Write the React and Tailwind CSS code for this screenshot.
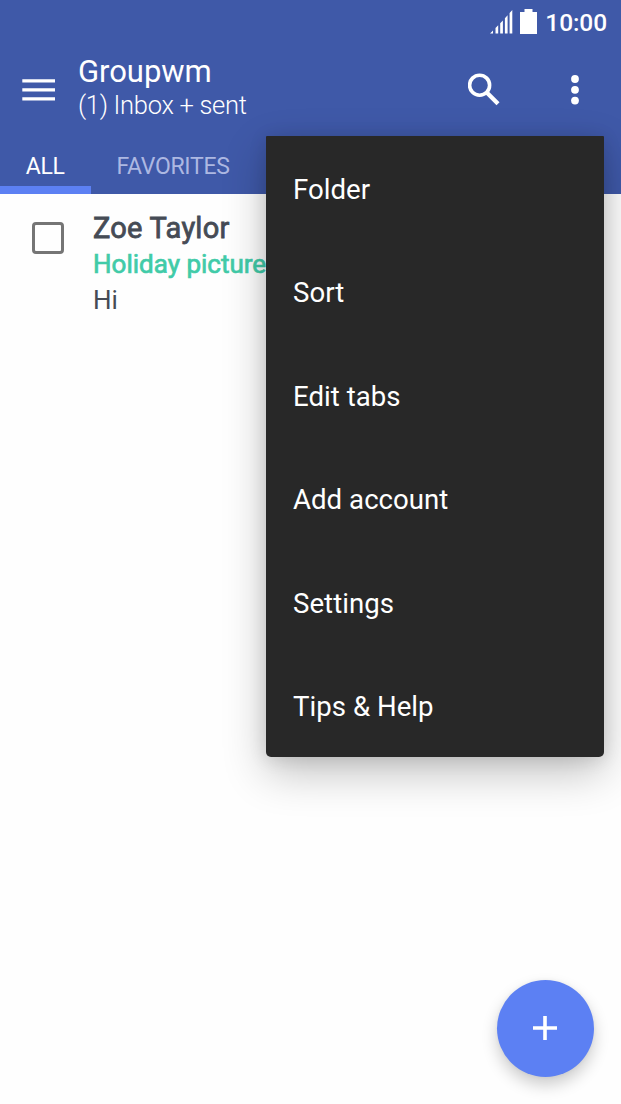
const menuItems = ["Folder", "Sort", "Edit tabs", "Add account", "Settings", "Tips & Help"];

function StatusBar() {
  return (
    <div className="flex h-[44px] items-center justify-end pr-[14px]">
      <svg className="mr-[7px] h-[25px] w-[23px]" viewBox="0 0 23 25" fill="#fff">
        <path d="M0 23.5 3 20.5V23.5ZM5.5 18 8.2 15.3V23.5H5.5ZM10.2 13.3 12.9 10.5V23.5H10.2ZM14.9 8.3 17.6 5.2V23.5H14.9ZM19.6 3 22.3 0V23.5H19.6Z" />
      </svg>
      <svg className="mr-[8px] mb-[2px] h-[25px] w-[17px]" viewBox="0 0 17 25" fill="#fff">
        <path d="M4.5 0H12.5V3H17V25H0V3H4.5Z" />
      </svg>
      <span className="pt-[1px] text-[24.5px] leading-[44px] font-medium tracking-[-0.1px]">10:00</span>
    </div>
  );
}

function Toolbar() {
  return (
    <div className="flex h-[94px] pl-[22px]">
      <svg className="mt-[35px] h-[22px] w-[33px]" viewBox="0 0 33 22" fill="#fff">
        <path d="M0.3 0.2H33V3.4H0.3ZM0.3 9.2H33V12.4H0.3ZM0.3 18.2H33V21.4H0.3Z" />
      </svg>
      <div className="ml-[23px] flex-1 pt-[10px]">
        <h1 className="text-[31px] leading-[36px] tracking-[-0.05px]">Groupwm</h1>
        <p className="text-[25.5px] leading-[30px] font-light tracking-[-0.3px]">(1) Inbox + sent</p>
      </div>
      <svg className="mt-[29px] mr-[71px] h-[33px] w-[32px]" viewBox="0 0 32 33" fill="none" stroke="#fff">
        <circle cx="11.6" cy="12.2" r="10" strokeWidth="3.6" />
        <path d="M19 19.7 30 30.7" strokeWidth="4.2" />
      </svg>
      <svg className="mt-[31px] mr-[42px] h-[30px] w-[8px]" viewBox="0 0 8 30" fill="#fff">
        <circle cx="4" cy="4" r="3.9" />
        <circle cx="4" cy="14.8" r="3.9" />
        <circle cx="4" cy="25.6" r="3.9" />
      </svg>
    </div>
  );
}

function Tabs() {
  return (
    <div className="flex h-[56px] text-[23px] leading-[58px] tracking-[-0.3px]">
      <div className="flex w-[90.5px] flex-col items-center">
        <span className="h-[48px]">ALL</span>
        <div className="h-[8px] w-full bg-[#5c80f3]" />
      </div>
      <div className="pl-[26px] text-[#adb8e2]">FAVORITES</div>
    </div>
  );
}

function MessageRow() {
  return (
    <div className="flex pt-[16px] pl-[32px] text-[#454b55]">
      <div className="mt-[12px] h-[32px] w-[32px] rounded-[4px] border-[3.5px] border-[#757575]" />
      <div className="ml-[29px] whitespace-nowrap">
        <div className="text-[29px] leading-[36px] tracking-[0.25px] [-webkit-text-stroke:0.8px_#454b55]">Zoe Taylor</div>
        <div className="text-[26px] leading-[36px] text-[#41cba8] [-webkit-text-stroke:0.7px_#41cba8]">Holiday pictures</div>
        <div className="text-[26px] leading-[37px]">Hi</div>
      </div>
    </div>
  );
}

export default function App() {
  return (
    <div className="relative h-[1104px] w-[621px] overflow-hidden bg-[#fefefe] font-['Roboto',sans-serif]">
      <header className="bg-[#3f59a8] text-white">
        <StatusBar />
        <Toolbar />
        <Tabs />
      </header>
      <MessageRow />
      <nav className="absolute top-[136px] left-[265.5px] w-[338px] rounded-t-[1px] rounded-b-[5px] bg-[#282828] text-white shadow-[0_16px_44px_rgba(0,0,0,0.24),0_2px_18px_rgba(0,0,0,0.12)]">
        {menuItems.map((item) => (
          <div key={item} className="flex h-[103.5px] items-center pt-[4px] pl-[27.5px] text-[27.6px] leading-[36px] tracking-[0.03px]">
            {item}
          </div>
        ))}
      </nav>
      <button className="absolute top-[980px] left-[497px] flex h-[96.5px] w-[96.5px] items-center justify-center rounded-full bg-[#5c80f3] shadow-[0_8px_16px_rgba(0,0,0,0.2),0_0_4px_rgba(0,0,0,0.05)]">
        <svg className="mr-[1px] mb-[1px] h-[24px] w-[24px]" viewBox="0 0 24 24" stroke="#fff" strokeWidth="3.6">
          <path d="M12 0V24M0 12H24" />
        </svg>
      </button>
    </div>
  );
}
